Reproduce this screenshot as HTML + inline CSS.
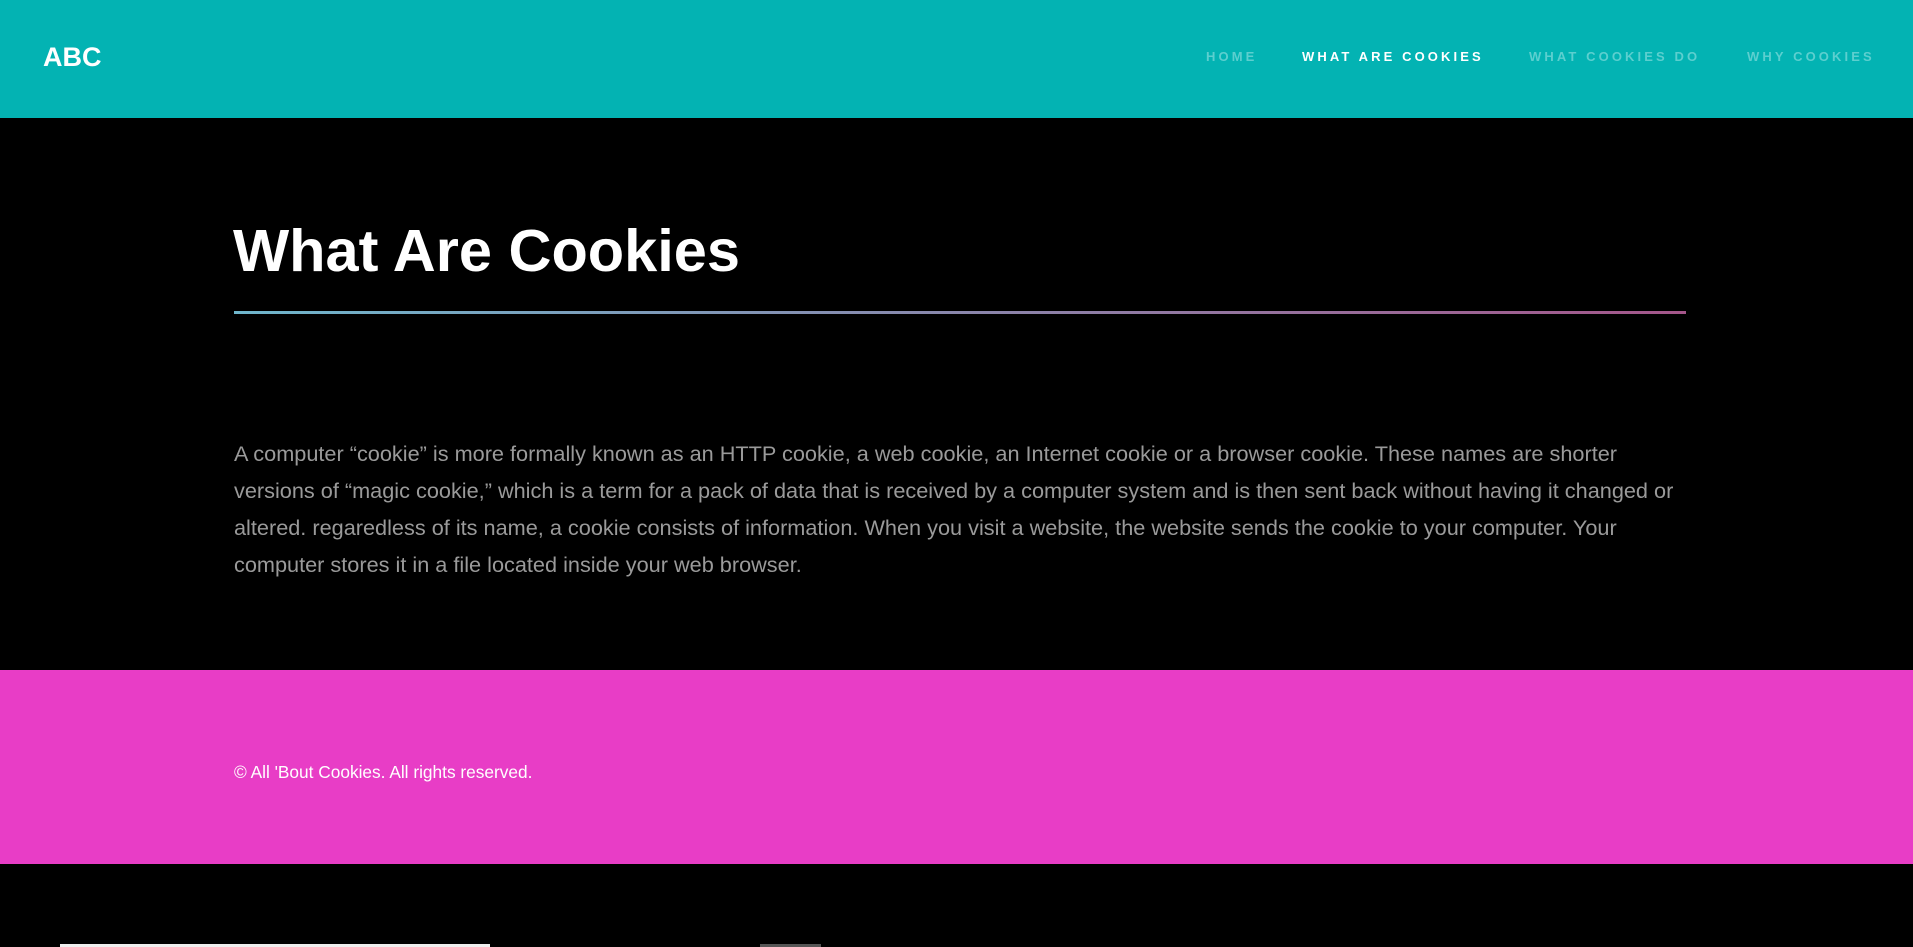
<!DOCTYPE html>
<html><head><meta charset="utf-8"><style>
*{margin:0;padding:0;box-sizing:border-box}
body{width:1913px;height:947px;background:#000;font-family:"Liberation Sans",Arial,sans-serif;position:relative;overflow:hidden}
.hdr{position:absolute;left:0;top:0;width:1913px;height:118px;background:#03b3b3}
.logo{position:absolute;left:43px;top:42px;font-size:27px;font-weight:bold;color:#fff;line-height:30px}
.nav a{position:absolute;top:50px;font-size:13px;font-weight:bold;letter-spacing:3.1px;color:#5ccfcf;text-decoration:none;line-height:14px;white-space:nowrap}
.nav a.act{color:#fff}
h1{position:absolute;left:233px;top:216px;font-size:59.5px;font-weight:bold;color:#fff;line-height:70px;white-space:nowrap}
.line{position:absolute;left:234px;top:311px;width:1452px;height:3px;background:linear-gradient(90deg,#6fb6cc,#a4568a)}
p{position:absolute;left:234px;top:435px;font-size:21.7px;line-height:37px;color:#9a9a9a;white-space:nowrap}
.ft{position:absolute;left:0;top:670px;width:1913px;height:194px;background:#e83dc6}
.ft span{position:absolute;left:234px;top:93px;font-size:17.3px;color:#fff;line-height:19px}
.b1{position:absolute;left:60px;top:944px;width:430px;height:3px;background:#eee}
.b2{position:absolute;left:760px;top:944px;width:61px;height:3px;background:#555}
</style></head><body>
<div class="hdr">
<div class="logo">ABC</div>
<div class="nav">
<a style="left:1206px">HOME</a>
<a class="act" style="left:1302px">WHAT ARE COOKIES</a>
<a style="left:1529px">WHAT COOKIES DO</a>
<a style="left:1747px">WHY COOKIES</a>
</div></div>
<h1>What Are Cookies</h1>
<div class="line"></div>
<p>A computer “cookie” is more formally known as an HTTP cookie, a web cookie, an Internet cookie or a browser cookie. These names are shorter<br>versions of “magic cookie,” which is a term for a pack of data that is received by a computer system and is then sent back without having it changed or<br>altered. regaredless of its name, a cookie consists of information. When you visit a website, the website sends the cookie to your computer. Your<br>computer stores it in a file located inside your web browser.</p>
<div class="ft"><span>© All 'Bout Cookies. All rights reserved.</span></div>
<div class="b1"></div><div class="b2"></div>
</body></html>
